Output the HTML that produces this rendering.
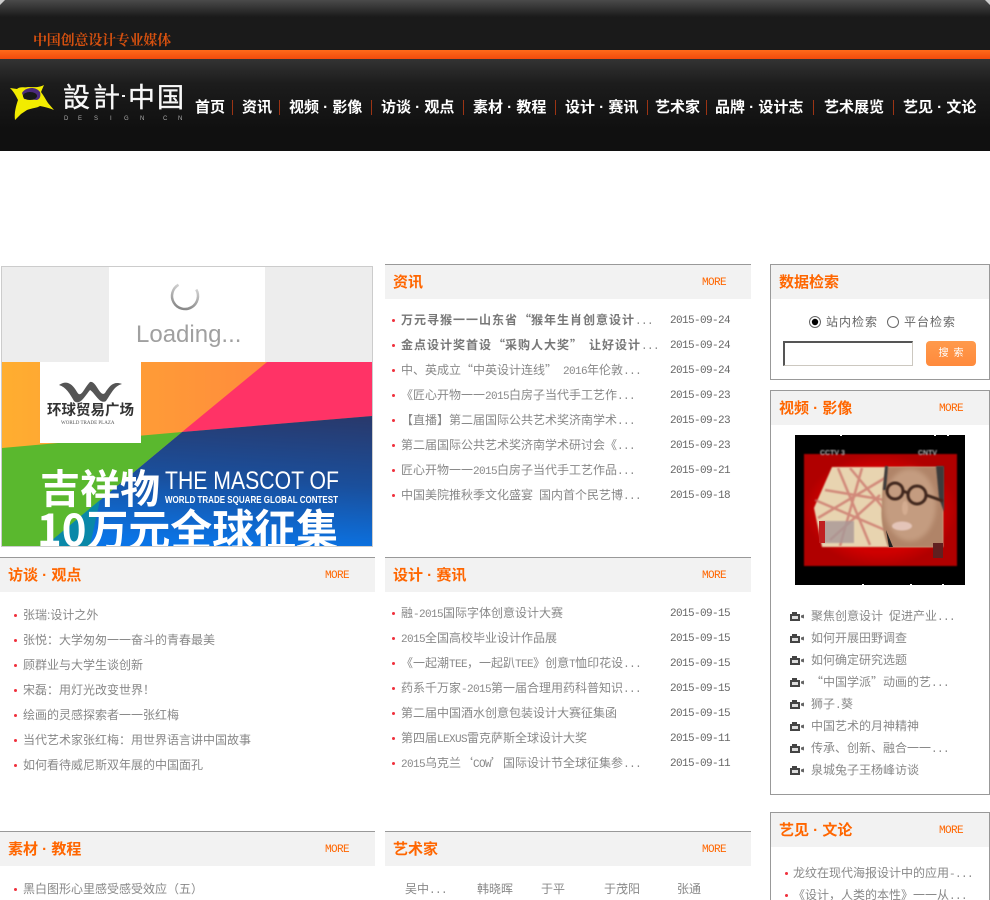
<!DOCTYPE html>
<html lang="zh-CN">
<head>
<meta charset="utf-8">
<title>设计中国</title>
<style>
html{margin:0;padding:0;height:900px;overflow:hidden;background:#fff}
body{margin:0;padding:0;background:#fff;width:990px;height:900px;position:relative;overflow:hidden;font-family:"WenQuanYi Zen Hei","Liberation Sans","Noto Sans CJK SC",sans-serif;font-size:12px;color:#888}
#p{position:absolute;left:0;top:0;width:990px;height:900px;overflow:hidden}
div,span{box-sizing:border-box}
.a{position:absolute;white-space:nowrap}
.l{font-family:"Liberation Mono",monospace;font-size:11px;letter-spacing:-.6px}
.r{height:20px;line-height:20px}
.d{color:#666;font-family:"Liberation Mono",monospace;font-size:11px;letter-spacing:-.6px;height:20px;line-height:20px;left:670px;transform:translateY(1px)}
.dot{position:absolute;width:3px;height:3px;background:#f0303c;border-radius:50%}
.hd{position:absolute;background:#f2f2f2;border-top:1px solid #999;height:35px}
.t{position:absolute;white-space:nowrap;font-size:15px;font-weight:bold;color:#f60;height:20px;line-height:20px;transform:translateY(1px)}
.m{position:absolute;font-family:"Liberation Mono",monospace;font-size:11px;letter-spacing:-.6px;color:#f60;height:20px;line-height:20px;transform:translateY(1px)}
.n{position:absolute;white-space:nowrap;color:#fff;font-size:15px;font-weight:bold;top:98px;height:20px;line-height:20px}
.s{position:absolute;top:100px;width:1px;height:15px;background:#9c3414}
.box{position:absolute;left:770px;width:220px;border:1px solid #999}
b{color:#777;letter-spacing:1px}
.qo,.qc{display:inline-block;width:12px;font-family:"Noto Sans CJK SC",sans-serif;line-height:12px}
.qo{text-align:right}.qc{text-align:left}
b .qo,b .qc{width:13px;letter-spacing:0}
.g{display:inline-block;width:6px}
</style>
</head>
<body>
<div id="p">
<!-- header -->
<div class="a" style="left:0;top:0;width:990px;height:50px;background:linear-gradient(#4a4a4a,#1a1a1a 17px,#1a1a1a)"></div>
<div class="a" style="left:0;top:50px;width:990px;height:9px;background:linear-gradient(#ff6a1a,#f24a0c)"></div>
<div class="a" style="left:0;top:59px;width:990px;height:92px;background:linear-gradient(#333,#1c1c1c 25px,#101010 70px,#101010)"></div>
<svg class="a" style="left:0;top:0" width="990" height="6"><polygon points="0,0 5,0 0,5" fill="#ccc"/><polygon points="990,0 985,0 990,5" fill="#ccc"/></svg>
<div class="a" style="left:33px;top:30px;height:20px;line-height:20px;font-family:'Noto Serif CJK SC',serif;font-size:14px;font-weight:bold;letter-spacing:-.2px;color:#d4500f">中国创意设计专业媒体</div>

<!-- logo -->
<svg class="a" style="left:0;top:70px" width="60" height="60" viewBox="0 70 60 60">
<path d="M10 88 L17 89 C20 86 24 88 28 87 C33 87 38 88 44 85 L41 92 C44 96 46 100 48 103 L54 110 C49 108 45 107 40 106 C37 108 32 108 27 110 L21 114 L15 120 C14 113 16 106 18 100 C16 96 14 92 10 88 Z" fill="#f2ec00"/>
<path d="M22 93 C25 87 36 86 40 92 C41 96 40 99 37 100 L24 99 Z" fill="#4b2a7c"/>
<ellipse cx="30" cy="96" rx="7" ry="4" fill="#181818"/>
</svg>
<svg class="a" style="left:60px;top:78px" width="130" height="48">
<g font-family="'Noto Sans CJK SC',sans-serif" font-size="27" fill="#f8f8f8" stroke="#f8f8f8" stroke-width=".35">
<text x="3" y="29">設</text><text x="33" y="29">計</text><text x="68" y="29">中</text><text x="97" y="29">国</text>
</g>
<rect x="62" y="17" width="3" height="2" fill="#eee"/>
<g font-family="'Liberation Sans',sans-serif" font-size="6" fill="#aaa">
<text x="4" y="42">D</text><text x="18" y="42">E</text><text x="34" y="42">S</text><text x="50" y="42">I</text><text x="64" y="42">G</text><text x="80" y="42">N</text><text x="103" y="42">C</text><text x="118" y="42">N</text>
</g>
</svg>

<!-- nav -->
<div class="n" style="left:195px">首页</div><div class="s" style="left:232px"></div>
<div class="n" style="left:242px">资讯</div><div class="s" style="left:279px"></div>
<div class="n" style="left:289px">视频 · 影像</div><div class="s" style="left:371px"></div>
<div class="n" style="left:381px">访谈 · 观点</div><div class="s" style="left:463px"></div>
<div class="n" style="left:473px">素材 · 教程</div><div class="s" style="left:555px"></div>
<div class="n" style="left:565px">设计 · 赛讯</div><div class="s" style="left:647px"></div>
<div class="n" style="left:655px">艺术家</div><div class="s" style="left:706px"></div>
<div class="n" style="left:715px">品牌 · 设计志</div><div class="s" style="left:813px"></div>
<div class="n" style="left:824px">艺术展览</div><div class="s" style="left:893px"></div>
<div class="n" style="left:903px">艺见 · 文论</div>

<!-- banner -->
<div class="a" style="left:1px;top:266px;width:372px;height:281px;border:1px solid #ccc;overflow:hidden">
<svg class="a" style="left:0;top:0" width="370" height="279" viewBox="2 267 370 279">
<defs>
<linearGradient id="or" x1="0" x2="1" y1="0" y2="0"><stop offset="0" stop-color="#ffae30"/><stop offset=".7" stop-color="#ff8c3c"/></linearGradient>
<linearGradient id="bl" x1="0.75" y1="0" x2="0.6" y2="1"><stop offset="0" stop-color="#283a6e"/><stop offset=".5" stop-color="#1a4f9c"/><stop offset="1" stop-color="#0a74e6"/></linearGradient>
<linearGradient id="sp" x1="0" y1="1" x2="1" y2="0"><stop offset="0" stop-color="#777"/><stop offset="1" stop-color="#eee"/></linearGradient>
</defs>
<rect x="2" y="267" width="370" height="95" fill="#ededed"/>
<rect x="109" y="267" width="156" height="95" fill="#fff"/>
<path d="M198 296 A13 13 0 1 1 185 283" transform="rotate(-30 185 296)" fill="none" stroke="url(#sp)" stroke-width="2.5"/>
<text x="136" y="342" font-family="'Liberation Sans',sans-serif" font-size="24" fill="#a0a0a0">Loading...</text>
<rect x="2" y="362" width="370" height="184" fill="url(#or)"/>
<polygon points="267,362 372,362 372,416 182,432" fill="#ff3366"/>
<polygon points="372,416 372,546 45,546 182,432" fill="url(#bl)"/>
<polygon points="2,448 182,432 45,546 2,546" fill="#5ab82e"/>
<polygon points="45,546 100,500 90,546" fill="#0a88a8"/>
<rect x="40" y="362" width="101" height="81" fill="#fff"/>
<path d="M59 385 C66 380 72 383 77 392 C81 399 84 388 90 382 C96 380 100 398 105 393 C110 385 114 381 122 384 C114 386 111 394 106 401 C100 405 95 393 90 390 C85 396 80 406 74 401 C70 394 66 387 59 385 Z" fill="#555"/>
<text x="47" y="415" font-family="'Noto Sans CJK SC',sans-serif" font-weight="bold" font-size="14.5" fill="#333">环球贸易广场</text>
<text x="61" y="424" font-family="'Liberation Serif',serif" font-size="5" fill="#555">WORLD TRADE PLAZA</text>
<g fill="#fff">
<text x="40" y="503" font-family="'Noto Sans CJK SC',sans-serif" font-weight="bold" font-size="40">吉祥物</text>
<text x="165" y="489" font-family="'Liberation Sans',sans-serif" font-size="25" textLength="174" lengthAdjust="spacingAndGlyphs">THE MASCOT OF</text>
<text x="165" y="503" font-family="'Liberation Sans',sans-serif" font-weight="bold" font-size="10" textLength="173" lengthAdjust="spacingAndGlyphs">WORLD TRADE SQUARE GLOBAL CONTEST</text>
<text x="37" y="546" font-family="'Noto Sans CJK SC','Liberation Sans',sans-serif" font-weight="bold" font-size="44" textLength="301" lengthAdjust="spacingAndGlyphs">10万元全球征集</text>
</g>
</svg>
</div>

<!-- 资讯 -->
<div class="hd" style="left:385px;top:264px;width:366px"></div>
<div class="t" style="left:393px;top:272px">资讯</div>
<div class="m" style="left:702px;top:272px">MORE</div>
<i class="dot" style="left:392px;top:319px"></i><div class="a r" style="left:401px;top:310px"><b>万元寻猴一一山东省<span class="qo">“</span>猴年生肖创意设计</b><span class="l">...</span></div><div class="a d" style="top:310px">2015-09-24</div>
<i class="dot" style="left:392px;top:344px"></i><div class="a r" style="left:401px;top:335px"><b>金点设计奖首设<span class="qo">“</span>采购人大奖<span class="qc">”</span><span class="g"></span>让好设计</b><span class="l">...</span></div><div class="a d" style="top:335px">2015-09-24</div>
<i class="dot" style="left:392px;top:369px"></i><div class="a r" style="left:401px;top:360px">中、英成立<span class="qo">“</span>中英设计连线<span class="qc">”</span><span class="g"></span><span class="l">2016</span>年伦敦<span class="l">...</span></div><div class="a d" style="top:360px">2015-09-24</div>
<i class="dot" style="left:392px;top:394px"></i><div class="a r" style="left:401px;top:385px">《匠心开物一一<span class="l">2015</span>白房子当代手工艺作<span class="l">...</span></div><div class="a d" style="top:385px">2015-09-23</div>
<i class="dot" style="left:392px;top:419px"></i><div class="a r" style="left:401px;top:410px">【直播】第二届国际公共艺术奖济南学术<span class="l">...</span></div><div class="a d" style="top:410px">2015-09-23</div>
<i class="dot" style="left:392px;top:444px"></i><div class="a r" style="left:401px;top:435px">第二届国际公共艺术奖济南学术研讨会《<span class="l">...</span></div><div class="a d" style="top:435px">2015-09-23</div>
<i class="dot" style="left:392px;top:469px"></i><div class="a r" style="left:401px;top:460px">匠心开物一一<span class="l">2015</span>白房子当代手工艺作品<span class="l">...</span></div><div class="a d" style="top:460px">2015-09-21</div>
<i class="dot" style="left:392px;top:494px"></i><div class="a r" style="left:401px;top:485px">中国美院推秋季文化盛宴<span class="g"></span>国内首个民艺博<span class="l">...</span></div><div class="a d" style="top:485px">2015-09-18</div>

<!-- 访谈 -->
<div class="hd" style="left:0;top:557px;width:375px"></div>
<div class="t" style="left:8px;top:565px">访谈 · 观点</div>
<div class="m" style="left:325px;top:565px">MORE</div>
<i class="dot" style="left:14px;top:614px"></i><div class="a r" style="left:23px;top:605px">张瑞:设计之外</div>
<i class="dot" style="left:14px;top:639px"></i><div class="a r" style="left:23px;top:630px">张悦：大学匆匆一一奋斗的青春最美</div>
<i class="dot" style="left:14px;top:664px"></i><div class="a r" style="left:23px;top:655px">顾群业与大学生谈创新</div>
<i class="dot" style="left:14px;top:689px"></i><div class="a r" style="left:23px;top:680px">宋磊：用灯光改变世界！</div>
<i class="dot" style="left:14px;top:714px"></i><div class="a r" style="left:23px;top:705px">绘画的灵感探索者一一张红梅</div>
<i class="dot" style="left:14px;top:739px"></i><div class="a r" style="left:23px;top:730px">当代艺术家张红梅：用世界语言讲中国故事</div>
<i class="dot" style="left:14px;top:764px"></i><div class="a r" style="left:23px;top:755px">如何看待威尼斯双年展的中国面孔</div>

<!-- 设计赛讯 -->
<div class="hd" style="left:385px;top:557px;width:366px"></div>
<div class="t" style="left:393px;top:565px">设计 · 赛讯</div>
<div class="m" style="left:702px;top:565px">MORE</div>
<i class="dot" style="left:392px;top:612px"></i><div class="a r" style="left:401px;top:603px">融<span class="l">-2015</span>国际字体创意设计大赛</div><div class="a d" style="top:603px">2015-09-15</div>
<i class="dot" style="left:392px;top:637px"></i><div class="a r" style="left:401px;top:628px"><span class="l">2015</span>全国高校毕业设计作品展</div><div class="a d" style="top:628px">2015-09-15</div>
<i class="dot" style="left:392px;top:662px"></i><div class="a r" style="left:401px;top:653px">《一起潮<span class="l">TEE</span>，一起趴<span class="l">TEE</span>》创意<span class="l">T</span>恤印花设<span class="l">...</span></div><div class="a d" style="top:653px">2015-09-15</div>
<i class="dot" style="left:392px;top:687px"></i><div class="a r" style="left:401px;top:678px">药系千万家<span class="l">-2015</span>第一届合理用药科普知识<span class="l">...</span></div><div class="a d" style="top:678px">2015-09-15</div>
<i class="dot" style="left:392px;top:712px"></i><div class="a r" style="left:401px;top:703px">第二届中国酒水创意包装设计大赛征集函</div><div class="a d" style="top:703px">2015-09-15</div>
<i class="dot" style="left:392px;top:737px"></i><div class="a r" style="left:401px;top:728px">第四届<span class="l">LEXUS</span>雷克萨斯全球设计大奖</div><div class="a d" style="top:728px">2015-09-11</div>
<i class="dot" style="left:392px;top:762px"></i><div class="a r" style="left:401px;top:753px"><span class="l">2015</span>乌克兰<span class="qo">‘</span><span class="l">COW</span><span class="qc">’</span>国际设计节全球征集参<span class="l">...</span></div><div class="a d" style="top:753px">2015-09-11</div>

<!-- 素材 -->
<div class="hd" style="left:0;top:831px;width:375px"></div>
<div class="t" style="left:8px;top:839px">素材 · 教程</div>
<div class="m" style="left:325px;top:839px">MORE</div>
<i class="dot" style="left:14px;top:888px"></i><div class="a r" style="left:23px;top:879px">黑白图形心里感受感受效应（五）</div>

<!-- 艺术家 -->
<div class="hd" style="left:385px;top:831px;width:366px"></div>
<div class="t" style="left:393px;top:839px">艺术家</div>
<div class="m" style="left:702px;top:839px">MORE</div>
<div class="a r" style="left:405px;top:879px">吴中<span class="l">...</span></div>
<div class="a r" style="left:477px;top:879px">韩晓晖</div>
<div class="a r" style="left:541px;top:879px">于平</div>
<div class="a r" style="left:604px;top:879px">于茂阳</div>
<div class="a r" style="left:677px;top:879px">张通</div>

<!-- 数据检索 -->
<div class="box" style="top:264px;height:116px"></div>
<div class="a" style="left:771px;top:265px;width:218px;height:34px;background:#f2f2f2"></div>
<div class="t" style="left:779px;top:272px">数据检索</div>
<svg class="a" style="left:808px;top:314px" width="94" height="16">
<circle cx="7" cy="8" r="5.5" fill="#fff" stroke="#666"/><circle cx="7" cy="8" r="3.2" fill="#000"/>
<circle cx="85" cy="8" r="5.5" fill="#fff" stroke="#666"/>
</svg>
<div class="a r" style="left:826px;top:312px;letter-spacing:1px;color:#666">站内检索</div>
<div class="a r" style="left:904px;top:312px;letter-spacing:1px;color:#666">平台检索</div>
<div class="a" style="left:783px;top:341px;width:130px;height:25px;background:#fff;border-style:solid;border-width:2px 1px 1px 2px;border-color:#555 #ccc8c0 #ccc8c0 #555"></div>
<div class="a" style="left:926px;top:341px;width:50px;height:25px;border-radius:4px;background:linear-gradient(#ff9a4c,#ff8a3c);text-align:center;color:#fff;font-size:10px;line-height:25px;letter-spacing:5px;padding-left:5px">搜索</div>

<!-- 视频 -->
<div class="box" style="top:390px;height:405px"></div>
<div class="a" style="left:771px;top:391px;width:218px;height:34px;background:#f2f2f2"></div>
<div class="t" style="left:779px;top:398px">视频 · 影像</div>
<div class="m" style="left:939px;top:398px">MORE</div>
<svg class="a" style="left:795px;top:435px" width="170" height="150" viewBox="795 435 170 150">
<defs>
<filter id="bl1"><feGaussianBlur stdDeviation="2"/></filter>
<filter id="bl2"><feGaussianBlur stdDeviation="0.9"/></filter>
<filter id="bl3"><feGaussianBlur stdDeviation="2.5"/></filter>
<radialGradient id="rd"><stop offset="0" stop-color="#a00008"/><stop offset=".75" stop-color="#d00000"/><stop offset="1" stop-color="#b00000"/></radialGradient>
</defs>
<rect x="795" y="435" width="170" height="150" fill="#000"/>
<rect x="804" y="454" width="153" height="112" fill="url(#rd)" filter="url(#bl2)"/>
<polygon points="832,467 943,467 943,547 822,547 814,508" fill="#e8d4b0" filter="url(#bl2)"/>
<g stroke="#c86a64" stroke-width="2.5" fill="none" opacity=".7" filter="url(#bl2)">
<path d="M818 518 L885 478 M830 540 L880 495 M838 468 L870 545 M815 500 L885 530 M850 468 L885 510 M825 490 L885 500 M862 468 L840 546"/>
</g>
<path d="M887 467 L943 467 L943 547 L888 547 C884 535 880 520 882 505 C882 490 883 478 887 467 Z" fill="#b08468" filter="url(#bl2)"/>
<ellipse cx="910" cy="505" rx="26" ry="36" fill="#c49c80" filter="url(#bl3)"/>
<path d="M885 466 L888 466 L886 490 L883 490 Z M936 466 L944 466 L944 512 L939 498 Z" fill="#3a3a3a" filter="url(#bl2)"/>
<path d="M893 547 L889 547 L886 530 Z" fill="#222"/>
<g fill="none" stroke="#40281c" stroke-width="3" filter="url(#bl2)"><circle cx="895" cy="491" r="8"/><circle cx="917" cy="495" r="9"/><path d="M903 491 L908 493 M926 495 L943 501"/></g>
<ellipse cx="902" cy="526" rx="10" ry="4.5" fill="#e4c4b8" filter="url(#bl2)"/>
<ellipse cx="905" cy="508" rx="3" ry="7" fill="#d4ac90" filter="url(#bl2)"/>
<rect x="933" y="543" width="10" height="15" fill="#602020"/>
<rect x="822" y="521" width="32" height="22" fill="#a89898" opacity=".8" filter="url(#bl2)"/>
<rect x="819" y="521" width="6" height="22" fill="#c02020"/>
<g fill="#bbb" font-family="'Liberation Sans',sans-serif" font-size="7" font-weight="bold" filter="url(#bl2)"><text x="820" y="455">CCTV 3</text><text x="918" y="455">CNTV</text></g>
<g fill="#fff"><rect x="840" y="435" width="2" height="1"/><rect x="934" y="435" width="2" height="1"/><rect x="947" y="435" width="2" height="1"/><rect x="862" y="584" width="2" height="1"/><rect x="910" y="584" width="2" height="1"/><rect x="942" y="584" width="2" height="1"/></g>
</svg>

<svg width="0" height="0" style="position:absolute"><defs><g id="cam"><path d="M1 3 H3 V1 H8 V3 H11 V10 H1 Z" fill="#444"/><rect x="3" y="5" width="6" height="3" fill="#ddd"/><path d="M12 4.5 L15 3.5 V7.5 L12 6.5 Z" fill="#666"/></g></defs></svg>
<svg class="a" style="left:789px;top:611px" width="16" height="12"><use href="#cam"/></svg><div class="a r" style="left:811px;top:606px">聚焦创意设计<span class="g"></span>促进产业<span class="l">...</span></div>
<svg class="a" style="left:789px;top:633px" width="16" height="12"><use href="#cam"/></svg><div class="a r" style="left:811px;top:628px">如何开展田野调查</div>
<svg class="a" style="left:789px;top:655px" width="16" height="12"><use href="#cam"/></svg><div class="a r" style="left:811px;top:650px">如何确定研究选题</div>
<svg class="a" style="left:789px;top:677px" width="16" height="12"><use href="#cam"/></svg><div class="a r" style="left:811px;top:672px"><span class="qo">“</span>中国学派<span class="qc">”</span>动画的艺<span class="l">...</span></div>
<svg class="a" style="left:789px;top:699px" width="16" height="12"><use href="#cam"/></svg><div class="a r" style="left:811px;top:694px">狮子<span class="l">.</span>葵</div>
<svg class="a" style="left:789px;top:721px" width="16" height="12"><use href="#cam"/></svg><div class="a r" style="left:811px;top:716px">中国艺术的月神精神</div>
<svg class="a" style="left:789px;top:743px" width="16" height="12"><use href="#cam"/></svg><div class="a r" style="left:811px;top:738px">传承、创新、融合一一<span class="l">...</span></div>
<svg class="a" style="left:789px;top:765px" width="16" height="12"><use href="#cam"/></svg><div class="a r" style="left:811px;top:760px">泉城兔子王杨峰访谈</div>

<!-- 艺见 -->
<div class="box" style="top:812px;height:100px"></div>
<div class="a" style="left:771px;top:813px;width:218px;height:34px;background:#f2f2f2"></div>
<div class="t" style="left:779px;top:820px">艺见 · 文论</div>
<div class="m" style="left:939px;top:820px">MORE</div>
<i class="dot" style="left:785px;top:872px"></i><div class="a r" style="left:793px;top:863px">龙纹在现代海报设计中的应用<span class="l">-...</span></div>
<i class="dot" style="left:785px;top:894px"></i><div class="a r" style="left:793px;top:885px">《设计，人类的本性》一一从<span class="l">...</span></div>
</div>
</body>
</html>
